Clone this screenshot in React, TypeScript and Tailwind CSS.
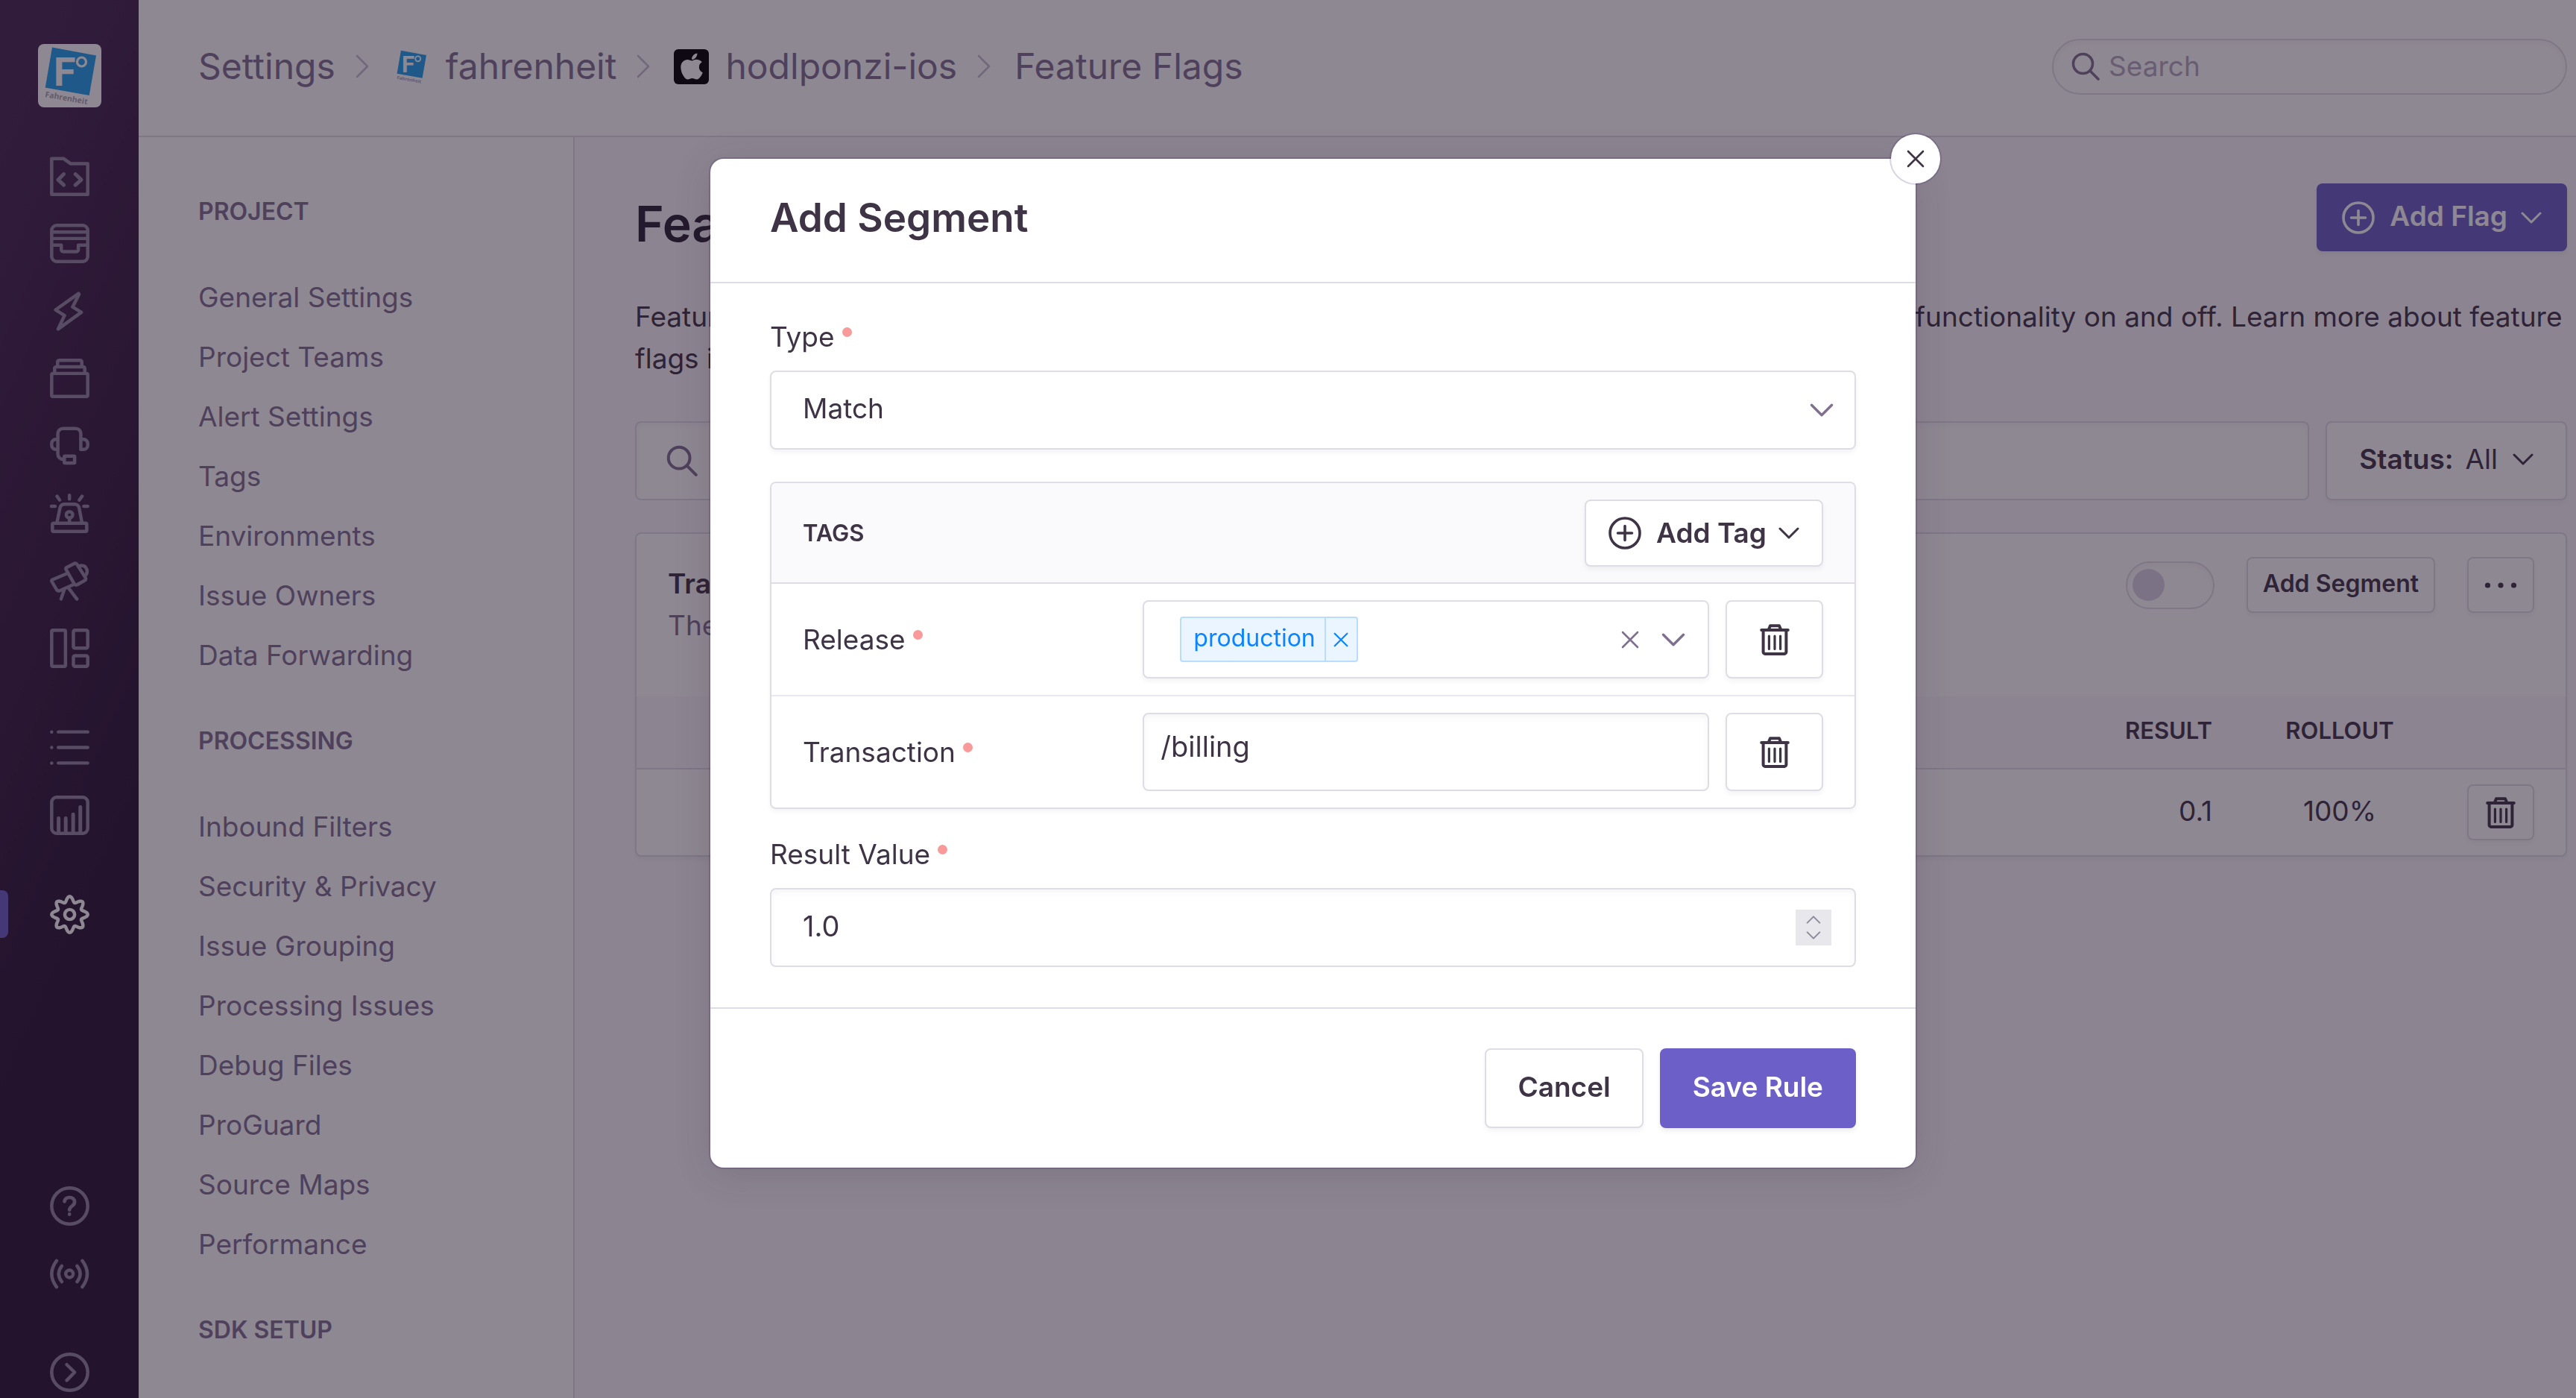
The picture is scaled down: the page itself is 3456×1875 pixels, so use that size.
import type { ReactNode } from "react";
import { FaApple } from "react-icons/fa";

/* ---------- icons ---------- */

function RailIcon({ children }: { children: ReactNode }) {
  return (
    <svg
      viewBox="0 0 16 16"
      className="block h-[53px] w-[53px]"
      fill="none"
      stroke="currentColor"
      strokeWidth="1.35"
      strokeLinecap="round"
      strokeLinejoin="round"
      aria-hidden="true"
    >
      {children}
    </svg>
  );
}

const gearPath =
  Array.from({ length: 145 }, (_, i) => {
    const t = (i / 144) * Math.PI * 2;
    const r = 6.2 + 1.1 * Math.cos(8 * t);
    return `${i ? "L" : "M"}${(8 + r * Math.cos(t)).toFixed(2)} ${(8 + r * Math.sin(t)).toFixed(2)}`;
  }).join("") + "Z";

const IconProjects = () => (
  <RailIcon>
    <path d="M.7 .8H5.5L8.4 2.9H15.3V15.3H.7Z" />
    <path d="M5.6 7.1L3.3 9.4L5.6 11.5M10.3 7.1L12.7 9.4L10.3 11.5" strokeWidth="1.5" />
  </RailIcon>
);
const IconIssues = () => (
  <RailIcon>
    <rect x=".7" y=".7" width="14.6" height="14.6" rx="2" />
    <path d="M.9 3.4H15.1M.9 6H15.1M.9 8.7H4.6V10.6a.7.7 0 0 0 .7.7H10.8a.7.7 0 0 0 .7-.7V8.7H15.1" />
  </RailIcon>
);
const IconLightning = () => (
  <RailIcon>
    <path d="M11.6 .8L2.3 7.4L5.9 9.7L3.3 15.2L12.7 8.4L9.2 6.2L11.8 1.1Z" />
  </RailIcon>
);
const IconReleases = () => (
  <RailIcon>
    <rect x=".7" y="6" width="14.6" height="9.3" rx=".5" />
    <path d="M1.9 6V3.9a.6.6 0 0 1 .6-.6H13.5a.6.6 0 0 1 .6.6V6M3.1 3.3V1.3a.6.6 0 0 1 .6-.6H12.3a.6.6 0 0 1 .6.6V3.3" />
  </RailIcon>
);
const IconSupport = () => (
  <RailIcon>
    <path d="M12.5 9.2V2.9A2.1 2.1 0 0 0 10.4 .8H5.3A2.1 2.1 0 0 0 3.2 2.9V11.2A2.1 2.1 0 0 0 5.3 13.3H5.8" />
    <rect x="5.8" y="12" width="4.2" height="2.8" rx=".3" />
    <path d="M3.1 5.2H2.4A1.7 1.7 0 0 0 .7 6.9V7.6A1.7 1.7 0 0 0 2.4 9.3H3.1M12.6 5.2H13.6A1.7 1.7 0 0 1 15.3 6.9V7.6A1.7 1.7 0 0 1 13.6 9.3H12.6" />
  </RailIcon>
);
const IconSiren = () => (
  <RailIcon>
    <rect x="1" y="12" width="13.9" height="3.3" rx=".5" />
    <path d="M2.8 11.9L4.1 5.7A1.8 1.8 0 0 1 5.8 4.3H10A1.8 1.8 0 0 1 11.8 5.7L13 11.9M7.9 9.8V12" />
    <circle cx="7.9" cy="8.6" r="1.3" />
    <path d="M7.9 .7V2.2M2.9 1.1L3.9 2.6M13 1.1L11.9 2.6M.6 5.1H2.1M13.7 5.1H15.3" />
  </RailIcon>
);
const IconTelescope = () => (
  <RailIcon>
    <path d="M6.7 5L1 7.4Q.5 7.7 .8 8.2L2.8 11.6Q3.2 12.1 3.8 11.9L9.2 9.5" />
    <path d="M6.5 3.2Q6.3 2.7 6.8 2.4L9.9 .8Q10.5 .6 10.9 1.1L14.4 6.6Q14.7 7.3 14.1 7.7L10.9 9.5Q10.3 9.7 9.9 9.2Z" />
    <path d="M11.9 1.8Q14.3 1.2 15 3.4Q15.3 5.2 14 5.9M5.8 11.4L4.5 15.2M7.4 10.6L10.9 15.2" />
  </RailIcon>
);
const IconDashboard = () => (
  <RailIcon>
    <rect x=".7" y=".7" width="5.6" height="14.6" rx=".5" />
    <rect x="9.5" y=".7" width="5.8" height="7.2" rx=".6" />
    <rect x="9.5" y="11" width="5.8" height="4.3" rx=".6" />
  </RailIcon>
);
const IconList = () => (
  <RailIcon>
    <path d="M.7 1.7V1.71M.7 8V8.01M.7 14.3V14.31M3.4 1.7H15.3M3.4 8H15.3M3.4 14.3H15.3" />
  </RailIcon>
);
const IconStats = () => (
  <RailIcon>
    <rect x=".7" y=".7" width="14.6" height="14.6" rx="2" />
    <path d="M3.5 9.2V15M6.4 9.2V15M9.4 7.6V15M12.3 4.7V15" strokeWidth="1.5" />
  </RailIcon>
);
const IconGear = () => (
  <RailIcon>
    <path d={gearPath} />
    <circle cx="8" cy="8" r="2" />
  </RailIcon>
);
const IconHelp = () => (
  <RailIcon>
    <circle cx="8" cy="8" r="7.3" />
    <path d="M5.9 6.2C5.9 3.9 10 4 10 6.4C10 8 7.9 8 7.9 9.6M7.9 11.3V11.4" strokeWidth="1.4" />
  </RailIcon>
);
const IconBroadcast = () => (
  <RailIcon>
    <circle cx="7.9" cy="8" r="1.5" />
    <path d="M2.7 2.7Q-1.3 8 2.7 13.3M13.1 2.7Q17.1 8 13.1 13.3M4.8 4.8Q2.3 8 4.8 11.2M11 4.8Q13.5 8 11 11.2" />
  </RailIcon>
);
const IconCollapse = () => (
  <RailIcon>
    <circle cx="8" cy="8" r="7.3" />
    <path d="M6.8 4.9L10 8L6.8 11.3" />
  </RailIcon>
);

function Chevron({ className = "h-4 w-7" }: { className?: string }) {
  return (
    <svg
      viewBox="0 0 28 16"
      className={`shrink-0 ${className}`}
      fill="none"
      stroke="currentColor"
      strokeWidth="3"
      strokeLinecap="round"
      strokeLinejoin="round"
      aria-hidden="true"
    >
      <path d="M2 2L14 14L26 2" />
    </svg>
  );
}

function PlusCircle() {
  return (
    <svg
      viewBox="0 0 44 44"
      className="h-11 w-11 shrink-0"
      fill="none"
      stroke="currentColor"
      strokeWidth="3.6"
      strokeLinecap="round"
      aria-hidden="true"
    >
      <circle cx="22" cy="22" r="20" />
      <path d="M22 12.5V31.5M12.5 22H31.5" />
    </svg>
  );
}

function Cross({ className }: { className: string }) {
  return (
    <svg
      viewBox="0 0 24 24"
      className={className}
      fill="none"
      stroke="currentColor"
      strokeWidth="2.6"
      strokeLinecap="round"
      aria-hidden="true"
    >
      <path d="M2 2L22 22M22 2L2 22" />
    </svg>
  );
}

function Trash() {
  return (
    <svg
      viewBox="0 0 40 42"
      className="h-[42px] w-10"
      fill="none"
      stroke="currentColor"
      strokeWidth="4"
      strokeLinecap="round"
      strokeLinejoin="round"
      aria-hidden="true"
    >
      <path d="M2.2 8H37.8M12 7L14 2.2H26L28 7" />
      <path d="M4.6 8V37.5A2.4 2.4 0 0 0 7 39.9H33A2.4 2.4 0 0 0 35.4 37.5V8" />
      <path d="M12.4 16V33.5M20 16V33.5M27.6 16V33.5" strokeWidth="3.2" />
    </svg>
  );
}

function SearchIcon({ className }: { className: string }) {
  return (
    <svg
      viewBox="0 0 38 38"
      className={className}
      fill="none"
      stroke="currentColor"
      strokeWidth="3.6"
      strokeLinecap="round"
      aria-hidden="true"
    >
      <circle cx="15.5" cy="15.5" r="13" />
      <path d="M25 25L36 36" />
    </svg>
  );
}

function FahrenheitLogo({ className }: { className: string }) {
  return (
    <svg viewBox="0 0 85 85" className={className} role="img" aria-label="Fahrenheit">
      <path d="M19 4.6L78 15.6L68.7 69L9.7 58.5Z" fill="#21a0ea" />
      <text x="21" y="56" fontFamily="Roboto" fontWeight="700" fontSize="54" fill="#fff">
        F
      </text>
      <circle cx="58.5" cy="24" r="6" fill="none" stroke="#fff" strokeWidth="3.2" />
      <text
        x="9"
        y="71"
        transform="rotate(10 9 71)"
        fontFamily="Open Sans"
        fontWeight="700"
        fontSize="10.5"
        fill="#a9a3ae"
      >
        Fahrenheit
      </text>
    </svg>
  );
}

/* ---------- page data ---------- */

const sections = [
  {
    title: "PROJECT",
    items: [
      "General Settings",
      "Project Teams",
      "Alert Settings",
      "Tags",
      "Environments",
      "Issue Owners",
      "Data Forwarding",
    ],
  },
  {
    title: "PROCESSING",
    items: [
      "Inbound Filters",
      "Security & Privacy",
      "Issue Grouping",
      "Processing Issues",
      "Debug Files",
      "ProGuard",
      "Source Maps",
      "Performance",
    ],
  },
  { title: "SDK SETUP", items: [] },
];

const primaryNav: [string, () => ReactNode][] = [
  ["Projects", IconProjects],
  ["Issues", IconIssues],
  ["Performance", IconLightning],
  ["Releases", IconReleases],
  ["User Feedback", IconSupport],
  ["Alerts", IconSiren],
  ["Discover", IconTelescope],
  ["Dashboards", IconDashboard],
];

function RailLink({ label, children }: { label: string; children: ReactNode }) {
  return (
    <a href="#" aria-label={label} className="block">
      {children}
    </a>
  );
}

function Rail() {
  return (
    <nav
      aria-label="Primary"
      className="flex min-h-screen w-[186px] shrink-0 flex-col items-center bg-[linear-gradient(294deg,#2a1532_35%,#452650_92%)] pt-[59px] pb-2 text-[#9386a0]"
    >
      <a href="#" className="rounded-lg bg-white">
        <FahrenheitLogo className="block h-[85px] w-[85px]" />
      </a>
      <div className="mt-[66px] flex h-[686px] flex-col justify-between">
        {primaryNav.map(([label, Icon]) => (
          <RailLink key={label} label={label}>
            <Icon />
          </RailLink>
        ))}
      </div>
      <div className="mt-[80px] flex flex-col gap-[38px]">
        <RailLink label="Activity">
          <IconList />
        </RailLink>
        <RailLink label="Stats">
          <IconStats />
        </RailLink>
      </div>
      <div className="mt-[74px] flex h-16 w-full items-center">
        <span className="h-16 w-[11px] rounded-r-lg bg-[#6c5fc7]" />
        <a href="#" aria-label="Settings" className="ml-[56px] text-white">
          <IconGear />
        </a>
      </div>
      <div className="mt-auto flex flex-col">
        <RailLink label="Help">
          <IconHelp />
        </RailLink>
        <a href="#" aria-label="What's new" className="mt-[38px]">
          <IconBroadcast />
        </a>
        <button type="button" aria-label="Expand" className="mt-[79px]">
          <IconCollapse />
        </button>
      </div>
    </nav>
  );
}

function CrumbSeparator() {
  return (
    <svg
      viewBox="0 0 18 32"
      className="mr-8 ml-[27px] h-8 w-[18px] shrink-0 text-[#c6becf]"
      fill="none"
      stroke="currentColor"
      strokeWidth="2.6"
      strokeLinecap="round"
      strokeLinejoin="round"
      aria-hidden="true"
    >
      <path d="M2 2L16 16L2 30" />
    </svg>
  );
}

function TopBar() {
  return (
    <header className="flex h-[184px] items-center justify-between border-b-2 border-[#e0dce5] bg-white pr-3 pb-1 pl-20">
      <nav aria-label="Breadcrumb" className="flex items-center text-[48px] leading-[60px] text-[#80708f]">
        <a href="#">Settings</a>
        <CrumbSeparator />
        <a href="#" className="flex items-center gap-[22px]">
          <FahrenheitLogo className="h-[49px] w-[49px]" />
          fahrenheit
        </a>
        <CrumbSeparator />
        <a href="#" className="flex items-center gap-[22px]">
          <span className="flex h-[47px] w-[47px] items-center justify-center rounded-md bg-black text-white">
            <FaApple className="h-[40px] w-[40px]" />
          </span>
          hodlponzi-ios
        </a>
        <CrumbSeparator />
        <a href="#">Feature Flags</a>
      </nav>
      <label className="flex h-[75px] w-[691px] items-center gap-3 rounded-full border-2 border-[#e0dce5] bg-white px-6 text-[#80708f] shadow-[inset_0_4px_8px_rgba(43,34,51,0.04)]">
        <SearchIcon className="h-[38px] w-[38px] shrink-0" />
        <input
          type="search"
          placeholder="Search"
          aria-label="Search"
          className="w-full bg-transparent text-[37px] leading-[50px] outline-none placeholder:text-[#b3a9bd]"
        />
      </label>
    </header>
  );
}

function SettingsNav() {
  return (
    <nav
      aria-label="Project settings"
      className="w-[585px] shrink-0 border-r-2 border-[#e0dce5] bg-white pt-20 pl-20 text-[#80708f]"
    >
      {sections.map((s) => (
        <section key={s.title} className="mb-[55px]">
          <h2 className="text-[32px] leading-10 font-semibold">{s.title}</h2>
          <ul className="mt-[55px]">
            {s.items.map((item) => (
              <li key={item} className="text-[37px] leading-20">
                <a href="#">{item}</a>
              </li>
            ))}
          </ul>
        </section>
      ))}
    </nav>
  );
}

const buttonBase =
  "flex shrink-0 items-center justify-center rounded-lg border-2 border-[#e0dce5] bg-white font-semibold text-[#3e3446] shadow-[0_4px_6px_rgba(43,34,51,0.05)]";

function FlagsPage() {
  return (
    <main className="min-w-0 flex-1 bg-[#faf9fb] pt-[62px] pr-3 pl-[81px] text-[#3e3446]">
      <div className="flex items-start justify-between">
        <h1 className="pt-4 text-[66px] leading-[76px] font-semibold text-[#2b2233]">Feature Flags</h1>
        <button
          type="button"
          className="flex h-[91px] items-center rounded-lg bg-[#6c5fc7] px-[34px] text-[37px] leading-[50px] font-semibold text-white shadow-[0_4px_6px_rgba(43,34,51,0.08)]"
        >
          <PlusCircle />
          <span className="ml-5 pb-1">Add Flag</span>
          <Chevron className="ml-[18px] h-4 w-7" />
        </button>
      </div>

      <p className="mt-[59px] text-[37px] leading-[56px]">
        Feature flags allow you to configure the code into different flavors by dynamically toggling certain
        functionality on and off. Learn more about feature flags in our documentation.
      </p>

      <div className="mt-[56px] flex gap-[22px]">
        <label className="flex h-[106px] flex-1 items-center gap-5 rounded-lg border-2 border-[#e0dce5] bg-white px-10 text-[#80708f] shadow-[inset_0_4px_8px_rgba(43,34,51,0.04)]">
          <SearchIcon className="h-[42px] w-[42px] shrink-0" />
          <input
            type="search"
            aria-label="Search feature flags"
            className="w-full bg-transparent text-[37px] leading-[50px] outline-none"
          />
        </label>
        <button type="button" className={`${buttonBase} h-[106px] px-[43px] pb-1 text-[37px] leading-[50px]`}>
          Status:
          <span className="ml-4 font-normal">All</span>
          <Chevron className="ml-5 h-4 w-7" />
        </button>
      </div>

      <section className="mt-[43px] rounded-lg border-2 border-[#e0dce5] bg-white shadow-[0_4px_6px_rgba(43,34,51,0.05)]">
        <div className="flex h-[218px] items-start justify-between px-[42px] pt-[31px]">
          <div className="pt-2 text-[37px] leading-[56px]">
            <h2 className="font-semibold">Transaction Sample Rate</h2>
            <p className="text-[#80708f]">The rate at which transactions are sampled</p>
          </div>
          <div className="flex items-center gap-[43px]">
            <button
              type="button"
              role="switch"
              aria-checked="false"
              aria-label="Flag enabled"
              className="flex h-16 w-[119px] items-center rounded-full border-2 border-[#e0dce5] px-[7px] shadow-[inset_0_4px_8px_rgba(43,34,51,0.04)]"
            >
              <span className="h-[43px] w-[43px] rounded-full bg-[#dbd3e4]" />
            </button>
            <button type="button" className={`${buttonBase} h-[75px] px-5 pb-1 text-[32px] leading-10`}>
              Add Segment
            </button>
            <button type="button" aria-label="More actions" className={`${buttonBase} h-[75px] w-[90px]`}>
              <svg viewBox="0 0 44 8" className="h-2 w-11" fill="currentColor" aria-hidden="true">
                <circle cx="4.5" cy="4" r="3.6" />
                <circle cx="22" cy="4" r="3.6" />
                <circle cx="39.5" cy="4" r="3.6" />
              </svg>
            </button>
          </div>
        </div>
        <table className="w-full">
          <thead>
            <tr className="h-[97px] border-b-2 border-[#e0dce5] bg-[#faf9fb] text-[31px] leading-10">
              <td />
              <th scope="col" className="w-[204px] pr-[44px] pb-1 text-right font-semibold">
                RESULT
              </th>
              <th scope="col" className="w-[254px] pb-1 text-center font-semibold">
                ROLLOUT
              </th>
              <td className="w-[176px]" />
            </tr>
          </thead>
          <tbody>
            <tr className="h-[116px] text-[37px] leading-[50px]">
              <td />
              <td className="pr-[44px] pb-1 text-right">0.1</td>
              <td className="pb-1 text-center">100%</td>
              <td className="pl-[44px]">
                <button type="button" aria-label="Delete segment" className={`${buttonBase} h-[75px] w-[90px]`}>
                  <Trash />
                </button>
              </td>
            </tr>
          </tbody>
        </table>
      </section>
    </main>
  );
}

/* ---------- dialog ---------- */

function FieldLabel({ htmlFor, children }: { htmlFor: string; children: ReactNode }) {
  return (
    <label htmlFor={htmlFor} className="flex gap-[10px] text-[37px] leading-[50px]">
      {children}
      <span aria-hidden="true" className="mt-3 h-[13px] w-[13px] rounded-full bg-[#f99a9a]" />
    </label>
  );
}

function TagRow({ children }: { children: ReactNode }) {
  return (
    <div className="grid grid-cols-3 items-center border-b-2 border-[#ebe6ef] px-[42px] py-[22px] last:border-b-0">
      {children}
    </div>
  );
}

function DeleteTag({ label }: { label: string }) {
  return (
    <button type="button" aria-label={label} className={`${buttonBase} h-[105px] w-[131px]`}>
      <Trash />
    </button>
  );
}

function AddSegmentDialog() {
  return (
    <div className="fixed inset-0 flex items-start justify-center bg-[#1d1127]/50 pt-[213px] pl-[67px]">
      <div
        role="dialog"
        aria-modal="true"
        aria-labelledby="dialog-title"
        className="relative w-full max-w-[1617px] rounded-[18px] bg-white text-[#3e3446] shadow-[0_0_0_2px_rgba(58,17,95,0.18),0_8px_50px_rgba(43,34,51,0.16)]"
      >
        <button
          type="button"
          aria-label="Close"
          className="absolute -top-[33px] -right-[33px] flex h-[66px] w-[66px] items-center justify-center rounded-full bg-white shadow-[0_0_0_2px_rgba(58,17,95,0.18)]"
        >
          <Cross className="h-6 w-6" />
        </button>

        <header className="border-b-2 border-[#e0dce5] px-20 pt-[47px] pb-[54px]">
          <h2 id="dialog-title" className="text-[53px] leading-[64px] font-semibold">
            Add Segment
          </h2>
        </header>

        <form className="px-20 pt-[47px] pb-[54px]">
          <FieldLabel htmlFor="type">Type</FieldLabel>
          <div className="relative mt-5">
            <select
              id="type"
              defaultValue="Match"
              className="block h-[106px] w-full appearance-none rounded-lg border-2 border-[#e0dce5] bg-white px-[42px] pb-1 text-[37px] leading-[50px] shadow-[0_4px_6px_rgba(43,34,51,0.05)] outline-none"
            >
              <option>Match</option>
            </select>
            <Chevron className="pointer-events-none absolute top-11 right-[30px] h-[18px] w-8 text-[#80708f]" />
          </div>

          <section className="mt-[43px] rounded-lg border-2 border-[#e0dce5] shadow-[0_4px_6px_rgba(43,34,51,0.05)]">
            <div className="flex h-[135px] items-center justify-between rounded-t-md border-b-2 border-[#e0dce5] bg-[#faf9fb] px-[42px]">
              <h3 className="text-[31px] leading-10 font-semibold">TAGS</h3>
              <button type="button" className={`${buttonBase} h-[90px] px-[30px] text-[37px] leading-[50px]`}>
                <PlusCircle />
                <span className="ml-5">Add Tag</span>
                <Chevron className="ml-4 h-4 w-7" />
              </button>
            </div>

            <TagRow>
              <FieldLabel htmlFor="release">Release</FieldLabel>
              <div className="col-span-2 flex min-w-0 gap-[22px]">
                <div className="flex h-[105px] min-w-0 flex-1 items-center rounded-lg border-2 border-[#e0dce5] bg-white pr-[30px] pl-12 shadow-[0_4px_6px_rgba(43,34,51,0.05)]">
                  <span className="flex h-[61px] shrink-0 items-stretch rounded border-2 border-[#b9dcff] bg-[#ebf5ff] text-[32px] leading-[54px] text-[#0a84ff]">
                    <span className="pr-3 pl-4">production</span>
                    <button
                      type="button"
                      aria-label="Remove production"
                      className="flex w-[43px] items-center justify-center border-l-2 border-[#b9dcff]"
                    >
                      <Cross className="h-5 w-5" />
                    </button>
                  </span>
                  <input
                    id="release"
                    type="text"
                    className="w-0 min-w-0 flex-1 bg-transparent px-2 text-[37px] outline-none"
                  />
                  <button type="button" aria-label="Clear release" className="shrink-0 text-[#80708f]">
                    <Cross className="h-6 w-6" />
                  </button>
                  <button
                    type="button"
                    aria-label="Open release options"
                    className="ml-[30px] shrink-0 text-[#80708f]"
                  >
                    <Chevron className="h-[18px] w-8" />
                  </button>
                </div>
                <DeleteTag label="Delete release tag" />
              </div>
            </TagRow>

            <TagRow>
              <FieldLabel htmlFor="transaction">Transaction</FieldLabel>
              <div className="col-span-2 flex min-w-0 gap-[22px]">
                <textarea
                  id="transaction"
                  rows={1}
                  defaultValue="/billing"
                  className="block h-[105px] min-w-0 flex-1 resize-none overflow-hidden rounded-lg border-2 border-[#e0dce5] bg-white px-[22px] pt-[18px] text-[38px] leading-[50px] shadow-[inset_0_4px_8px_rgba(43,34,51,0.04)] outline-none"
                />
                <DeleteTag label="Delete transaction tag" />
              </div>
            </TagRow>
          </section>

          <div className="mt-9">
            <FieldLabel htmlFor="result">Result Value</FieldLabel>
          </div>
          <div className="mt-5 flex h-[106px] items-center rounded-lg border-2 border-[#e0dce5] pr-[31px] pl-[42px] shadow-[inset_0_4px_8px_rgba(43,34,51,0.04)]">
            <input
              id="result"
              type="number"
              step="0.1"
              defaultValue="1.0"
              className="min-w-0 flex-1 appearance-none bg-transparent pb-1 text-[38px] leading-[50px] outline-none [-moz-appearance:textfield] [&::-webkit-inner-spin-button]:appearance-none"
            />
            <div className="flex h-12 w-12 flex-col items-center justify-center gap-[10px] bg-[#e8e7eb] text-[#908a9c]">
              <button type="button" aria-label="Increase" className="block">
                <Chevron className="h-[11px] w-5 rotate-180" />
              </button>
              <button type="button" aria-label="Decrease" className="block">
                <Chevron className="h-[11px] w-5" />
              </button>
            </div>
          </div>
        </form>

        <footer className="flex justify-end gap-[22px] border-t-2 border-[#e0dce5] px-20 py-[53px] text-[37px] leading-[50px]">
          <button type="button" className={`${buttonBase} h-[107px] px-[42px] pb-1`}>
            Cancel
          </button>
          <button
            type="submit"
            className="flex h-[107px] items-center rounded-lg bg-[#6c5fc7] px-11 pb-1 font-semibold text-white shadow-[0_4px_6px_rgba(43,34,51,0.08)]"
          >
            Save Rule
          </button>
        </footer>
      </div>
    </div>
  );
}

export default function App() {
  return (
    <div className="flex min-h-screen bg-[#faf9fb] font-['Inter',sans-serif]">
      <Rail />
      <div className="flex min-w-0 flex-1 flex-col">
        <TopBar />
        <div className="flex flex-1">
          <SettingsNav />
          <FlagsPage />
        </div>
      </div>
      <AddSegmentDialog />
    </div>
  );
}
